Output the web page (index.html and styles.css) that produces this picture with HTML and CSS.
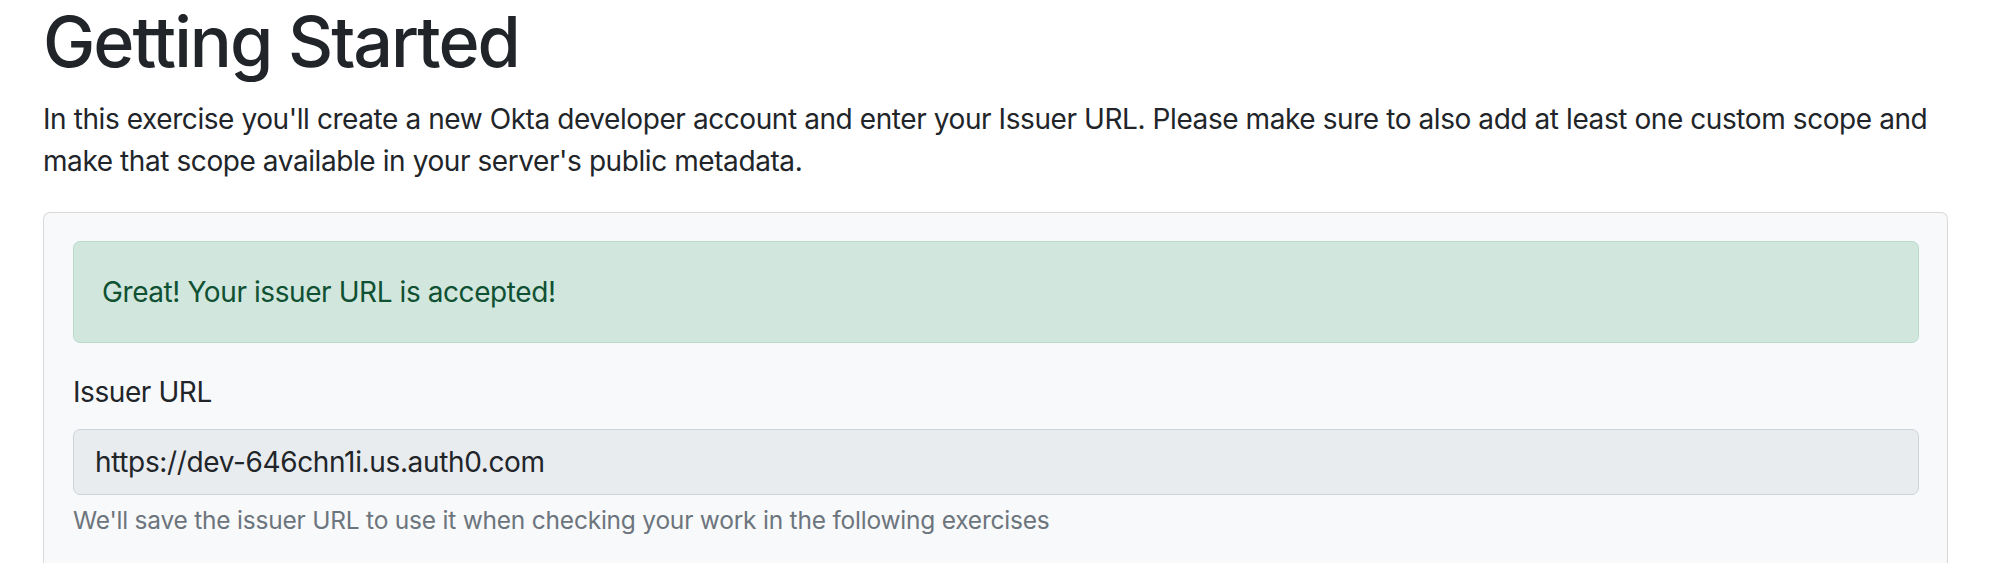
FILE: index.html
```html
<!DOCTYPE html>
<html lang="en">
<head>
<meta charset="utf-8">
<title>Getting Started</title>
<link rel="stylesheet" href="styles.css">
</head>
<body>
<main class="container">
  <h1 class="title">Getting Started</h1>
  <p class="lead-text">In this exercise you'll create a new Okta developer account and enter your Issuer URL. Please make sure to also add at least one custom scope and make that scope available in your server's public metadata.</p>
  <section class="card">
    <div class="card-body">
      <div class="alert alert-success">Great! Your issuer URL is accepted!</div>
      <div class="field">
        <label class="form-label" for="issuer">Issuer URL</label>
        <input class="form-control" id="issuer" type="text" value="https://dev-646chn1i.us.auth0.com" readonly>
        <div class="form-text">We'll save the issuer URL to use it when checking your work in the following exercises</div>
      </div>
    </div>
  </section>
</main>
</body>
</html>
```
FILE: styles.css
```css
html, body {
  margin: 0;
  padding: 0;
  background: #fff;
}
body {
  font-family: "Inter", "Liberation Sans", sans-serif;
  font-size: 28px;
  line-height: 1.5;
  letter-spacing: -0.42px;
  color: #212529;
}
.container {
  width: 1905px;
  padding-left: 43px;
}
.title {
  margin: 0 0 14px;
  font-size: 70px;
  font-weight: 500;
  line-height: 1.2;
  letter-spacing: -2px;
  color: #212529;
}
.lead-text {
  margin: 0 0 30px;
}
.card {
  background: #f8f9fa;
  border: 1px solid rgba(0, 0, 0, 0.125);
  border-radius: 7px;
}
.card-body {
  padding: 28px 28px 28px 29px;
}
.alert {
  padding: 29px 28px;
  margin-bottom: 28px;
  border: 1px solid #badbcc;
  border-radius: 7px;
}
.alert-success {
  background: #d1e7dd;
  color: #0f5132;
}
.field {
  display: flex;
  flex-direction: column;
}
.form-label {
  margin-bottom: 16px;
}
.form-control {
  box-sizing: border-box;
  height: 66px;
  padding: 11px 21px;
  font: inherit;
  letter-spacing: -0.36px;
  color: #212529;
  background: #e9ecef;
  border: 1px solid #ced4da;
  border-radius: 7px;
  outline: none;
}
.form-text {
  margin-top: 7px;
  font-size: 24.5px;
  letter-spacing: -0.22px;
  color: #6c757d;
}
```
